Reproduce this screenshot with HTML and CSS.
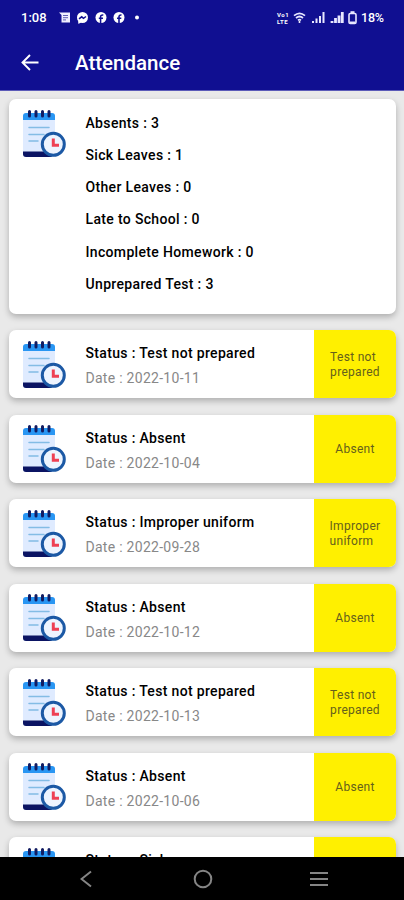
FILE: index.html
```
<!DOCTYPE html>
<html lang="en">
<head>
<meta charset="utf-8">
<title>Attendance</title>
<link rel="stylesheet" href="styles.css">
</head>
<body>
<svg class="defs" aria-hidden="true">
  <symbol id="pad" viewBox="0 0 44 48">
    <rect x="1" y="4" width="32" height="43" rx="2.5" fill="#dfebff"/>
    <path d="M1 10V6Q1 3 4 3H30Q33 3 33 6V10Z" fill="#2996f3"/>
    <path d="M1 41.500H26L30 47H4Q1 47 1 44Z" fill="#0b1463"/>
    <path d="M7.500 1.500V6M14 1.500V6M20.500 1.500V6M27 1.500V6" stroke="#111c62" stroke-width="3" stroke-linecap="round"/>
    <path d="M7 17.500H27M7 24.500H22M7 31H16" stroke="#83bce5" stroke-width="1.500" stroke-linecap="round"/>
    <circle cx="31.300" cy="34.300" r="11" fill="#edf4ff" stroke="#1c59a5" stroke-width="3"/>
    <path d="M31.300 28.500V35.300H37" fill="none" stroke="#ee4054" stroke-width="3"/>
  </symbol>
</svg>
<div class="phone">
  <header class="top">
    <div class="status">
      <span class="time">1:08</span>
      <svg class="notices" width="84" height="14" viewBox="0 0 84 14">
        <path d="M0 1.500H11V11.500H2.500V4Z" fill="#eeeeff"/>
        <path d="M4 4.500H9M4 6.700H9M4 8.900H7" stroke="#3937a0" stroke-width=".8"/>
        <circle cx="23.500" cy="6.500" r="5.500" fill="#fff"/>
        <path d="M19 10L19.500 13L22.500 11Z" fill="#fff"/>
        <path d="M20 7.800L22.700 5.800L24.500 7.300L27 5.500" fill="none" stroke="#100f91" stroke-width="1.500"/>
        <circle cx="42" cy="6.500" r="5.500" fill="#fff"/>
        <path d="M41.600 12V5.800Q41.600 3.700 44.300 4M39.800 7.300H44" fill="none" stroke="#100f91" stroke-width="1.500"/>
        <circle cx="60" cy="6.500" r="5.500" fill="#fff"/>
        <path d="M60 12.500V5.800Q60 3.700 62.500 4M58 7.300H62.300" fill="none" stroke="#100f91" stroke-width="1.600"/>
        <circle cx="78" cy="6.500" r="2" fill="#fff"/>
      </svg>
      <span class="volte"><span>Vo1</span><span>LTE</span></span>
      <svg class="signals" width="66" height="14" viewBox="0 0 66 14" fill="none" stroke="#e7e7ff">
        <path d="M1 4.700Q6.500 0 12 4.700M3 7Q6.500 4 10 7M5 9.300Q6.500 8 8 9.300" stroke-width="1.700"/>
        <circle cx="6.500" cy="11" r="1" fill="#fff" stroke="none"/>
        <path d="M20 12V10M23.500 12V7.500M27 12V5M30.500 12V1" stroke-width="2"/>
        <path d="M39 12V10M42.500 12V7M46 12V4.500M49.300 12V1" stroke-width="2.800"/>
        <rect x="56" y="2.500" width="7" height="10" rx="1.300" stroke-width="1.600"/>
        <path d="M57.500 1.200H61.500" stroke-width="2"/><path d="M56.500 11.500H62.500" stroke-width="2"/>
      </svg>
      <span class="battery">18%</span>
    </div>
    <div class="appbar">
      <svg class="back" width="18" height="17" viewBox="0 0 18 17" fill="none" stroke="#fff" stroke-width="1.900"><path d="M17.500 8.500H2M9 1L1.500 8.500L9 16"/></svg>
      <h1>Attendance</h1>
    </div>
  </header>
  <main>
    <section class="card summary">
      <svg class="pad"><use href="#pad"/></svg>
      <ul>
        <li>Absents : 3</li><li>Sick Leaves : 1</li><li>Other Leaves : 0</li><li>Late to School : 0</li><li>Incomplete Homework : 0</li><li>Unprepared Test : 3</li>
      </ul>
    </section>
    <article class="card item"><svg class="pad"><use href="#pad"/></svg><div class="info"><h2>Status : Test not prepared</h2><p>Date : 2022-10-11</p></div><div class="tag"><span>Test not<br>prepared</span></div></article>
    <article class="card item"><svg class="pad"><use href="#pad"/></svg><div class="info"><h2>Status : Absent</h2><p>Date : 2022-10-04</p></div><div class="tag"><span>Absent</span></div></article>
    <article class="card item"><svg class="pad"><use href="#pad"/></svg><div class="info"><h2>Status : Improper uniform</h2><p>Date : 2022-09-28</p></div><div class="tag"><span>Improper<br>uniform</span></div></article>
    <article class="card item"><svg class="pad"><use href="#pad"/></svg><div class="info"><h2>Status : Absent</h2><p>Date : 2022-10-12</p></div><div class="tag"><span>Absent</span></div></article>
    <article class="card item"><svg class="pad"><use href="#pad"/></svg><div class="info"><h2>Status : Test not prepared</h2><p>Date : 2022-10-13</p></div><div class="tag"><span>Test not<br>prepared</span></div></article>
    <article class="card item"><svg class="pad"><use href="#pad"/></svg><div class="info"><h2>Status : Absent</h2><p>Date : 2022-10-06</p></div><div class="tag"><span>Absent</span></div></article>
    <article class="card item"><svg class="pad"><use href="#pad"/></svg><div class="info"><h2>Status : Sick</h2></div><div class="tag"></div></article>
  </main>
  <nav>
    <svg width="12" height="18" viewBox="0 0 12 18"><path d="M11 1.500L1.500 9L11 16.500"/></svg>
    <svg class="home" width="20" height="20" viewBox="0 0 20 20"><circle cx="10" cy="10" r="8.300"/></svg>
    <svg width="18" height="18" viewBox="0 0 18 18"><path d="M0 3H18M0 9H18M0 15H18"/></svg>
  </nav>
</div>
</body>
</html>
```
FILE: styles.css
```
* { box-sizing: border-box; }
body { margin: 0; font-family: Roboto, "Liberation Sans", sans-serif; }
h1, h2, p, ul { margin: 0; padding: 0; }
svg { display: block; flex: none; }
.defs { display: none; }
.phone { width: 404px; height: 900px; display: flex; flex-direction: column; overflow: hidden; background: #e9e9e9; }
.top { flex: none; height: 91px; background: #100f91; border-bottom: 1px solid #5b5ab8; color: #fff; }
.status { height: 35px; padding: 0 20px 0 21px; display: flex; align-items: center; }
.time { width: 38px; font-size: 13px; font-weight: 500; letter-spacing: 0; }
.volte { margin-left: auto; width: 16px; font-size: 6px; line-height: 7px; font-weight: 700; letter-spacing: .5px; display: flex; flex-direction: column; }
.signals { margin-right: 2px; }
.battery { width: 23px; font-size: 12.500px; font-weight: 500; white-space: nowrap; letter-spacing: -.2px; }
.appbar { height: 55px; padding-left: 21px; display: flex; align-items: center; }
h1 { margin-left: 36px; font-size: 20.5px; font-weight: 500; line-height: 24px; }
main { flex: 1; min-height: 0; overflow: hidden; padding: 8px 8px 0 9px; display: flex; flex-direction: column; gap: 16.500px; }
.card { flex: none; display: flex; background: #fff; border-radius: 7px; box-shadow: 0 3px 6px rgba(0,0,0,.25); }
.pad { width: 44px; height: 48px; margin: 10.500px 0 0 13px; }
.summary { height: 214.500px; }
.summary ul { list-style: none; margin-left: 19.500px; padding-top: 7.500px; }
.summary li { height: 32.250px; line-height: 32px; font-size: 14px; font-weight: 500; letter-spacing: .34px; color: #000; }
.item { height: 68px; overflow: hidden; }
.info { flex: 1; margin-left: 19.500px; padding-top: 13px; }
h2 { font-size: 14px; line-height: 20px; font-weight: 500; color: #000; letter-spacing: .33px; white-space: nowrap; }
.info p { margin-top: 5px; font-size: 14px; line-height: 20px; letter-spacing: .28px; color: #888; }
.tag { width: 82px; background: #fff000; display: flex; align-items: center; justify-content: center; padding-top: 1px; font-size: 12px; line-height: 14.500px; letter-spacing: .3px; color: #655f1c; }
nav { flex: none; height: 43px; background: #000; display: flex; justify-content: space-between; padding: 13px 76px 0 80px; }
nav svg { fill: none; stroke: #858585; stroke-width: 2; }
nav .home { margin: -1px -2px 0 2px; }
```
